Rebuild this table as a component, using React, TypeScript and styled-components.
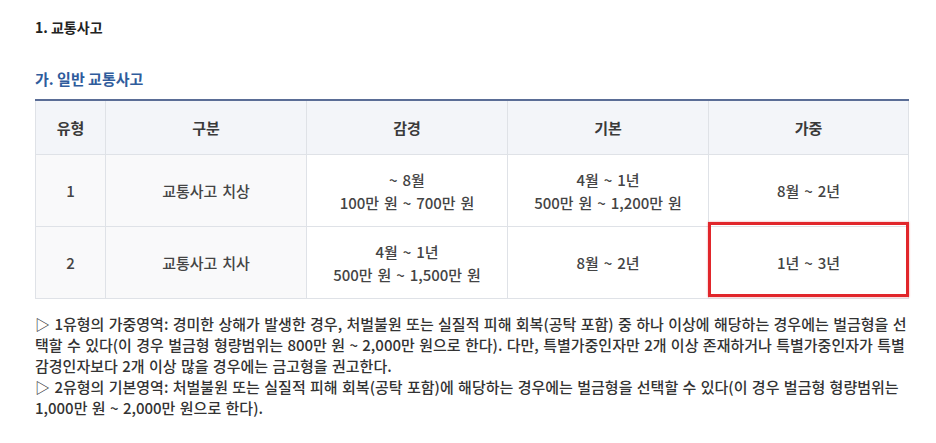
import React from "react";
import styled, { createGlobalStyle } from "styled-components";

const GlobalStyle = createGlobalStyle`
  html, body { margin: 0; padding: 0; background: #ffffff; }
  body { font-family: "Noto Sans CJK KR", "Noto Sans", sans-serif; color: #333; }
`;

const Page = styled.div`
  padding: 17px 28px 0 35px;
  width: 873px;
`;

const Title = styled.h2`
  margin: 0;
  font-size: 14px;
  line-height: 20px;
  font-weight: 700;
  color: #222;
`;

const SubTitle = styled.h3`
  margin: 32px 0 0;
  font-size: 15px;
  line-height: 20px;
  font-weight: 700;
  color: #2f5c9c;
`;

const Table = styled.table`
  margin-top: 10px;
  width: 873px;
  border-collapse: collapse;
  table-layout: fixed;
  border-top: 2px solid #5a6d96;
  font-size: 15px;
  color: #444;
  word-spacing: 1.5px;
`;

const Th = styled.th`
  height: 53px;
  padding: 0;
  background: #f3f5f9;
  border: 1px solid #dfe2e7;
  border-top: none;
  font-weight: 700;
  color: #3a3a3a;
  text-align: center;
`;

const Td = styled.td<{ $shade?: boolean }>`
  position: relative;
  height: 71px;
  padding: 0;
  border: 1px solid #dfe2e7;
  background: ${(p) => (p.$shade ? "#f9f9fa" : "#ffffff")};
  text-align: center;
  line-height: 23px;
  font-weight: 500;
`;

const Highlight = styled.span`
  position: absolute;
  top: -5px;
  left: -1px;
  right: -1px;
  bottom: 1px;
  border: 3px solid #e1262b;
  box-shadow: 0 0 2px rgba(225, 38, 43, 0.45);
  pointer-events: none;
`;

const Notes = styled.div`
  margin-top: 14px;
  font-size: 15px;
  line-height: 21px;
  font-weight: 500;
  color: #333;
  word-spacing: 1px;
  word-break: break-all;
`;

const NoteLine = styled.p`
  margin: 0;
`;

const rows = [
  {
    type: "1",
    name: "교통사고 치상",
    reduce: ["~ 8월", "100만 원 ~ 700만 원"],
    base: ["4월 ~ 1년", "500만 원 ~ 1,200만 원"],
    add: ["8월 ~ 2년"],
    mark: false,
  },
  {
    type: "2",
    name: "교통사고 치사",
    reduce: ["4월 ~ 1년", "500만 원 ~ 1,500만 원"],
    base: ["8월 ~ 2년"],
    add: ["1년 ~ 3년"],
    mark: true,
  },
];

const Lines = ({ items }: { items: string[] }) => (
  <>
    {items.map((t, i) => (
      <React.Fragment key={i}>
        {i > 0 && <br />}
        {t}
      </React.Fragment>
    ))}
  </>
);

export default function App() {
  return (
    <>
      <GlobalStyle />
      <Page>
        <Title>1. 교통사고</Title>
        <SubTitle>가. 일반 교통사고</SubTitle>
        <Table>
          <colgroup>
            <col style={{ width: 70 }} />
            <col style={{ width: 201 }} />
            <col style={{ width: 201 }} />
            <col style={{ width: 201 }} />
            <col style={{ width: 200 }} />
          </colgroup>
          <thead>
            <tr>
              <Th>유형</Th>
              <Th>구분</Th>
              <Th>감경</Th>
              <Th>기본</Th>
              <Th>가중</Th>
            </tr>
          </thead>
          <tbody>
            {rows.map((r) => (
              <tr key={r.type}>
                <Td $shade>{r.type}</Td>
                <Td $shade>{r.name}</Td>
                <Td>
                  <Lines items={r.reduce} />
                </Td>
                <Td>
                  <Lines items={r.base} />
                </Td>
                <Td>
                  <Lines items={r.add} />
                  {r.mark && <Highlight />}
                </Td>
              </tr>
            ))}
          </tbody>
        </Table>
        <Notes>
          <NoteLine>
            ▷ 1유형의 가중영역: 경미한 상해가 발생한 경우, 처벌불원 또는 실질적 피해 회복(공탁 포함) 중 하나 이상에 해당하는 경우에는 벌금형을 선택할 수 있다(이 경우 벌금형 형량범위는 800만 원 ~ 2,000만 원으로 한다). 다만, 특별가중인자만 2개 이상 존재하거나 특별가중인자가 특별감경인자보다 2개 이상 많을 경우에는 금고형을 권고한다.
          </NoteLine>
          <NoteLine>
            ▷ 2유형의 기본영역: 처벌불원 또는 실질적 피해 회복(공탁 포함)에 해당하는 경우에는 벌금형을 선택할 수 있다(이 경우 벌금형 형량범위는 1,000만 원 ~ 2,000만 원으로 한다).
          </NoteLine>
        </Notes>
      </Page>
    </>
  );
}
